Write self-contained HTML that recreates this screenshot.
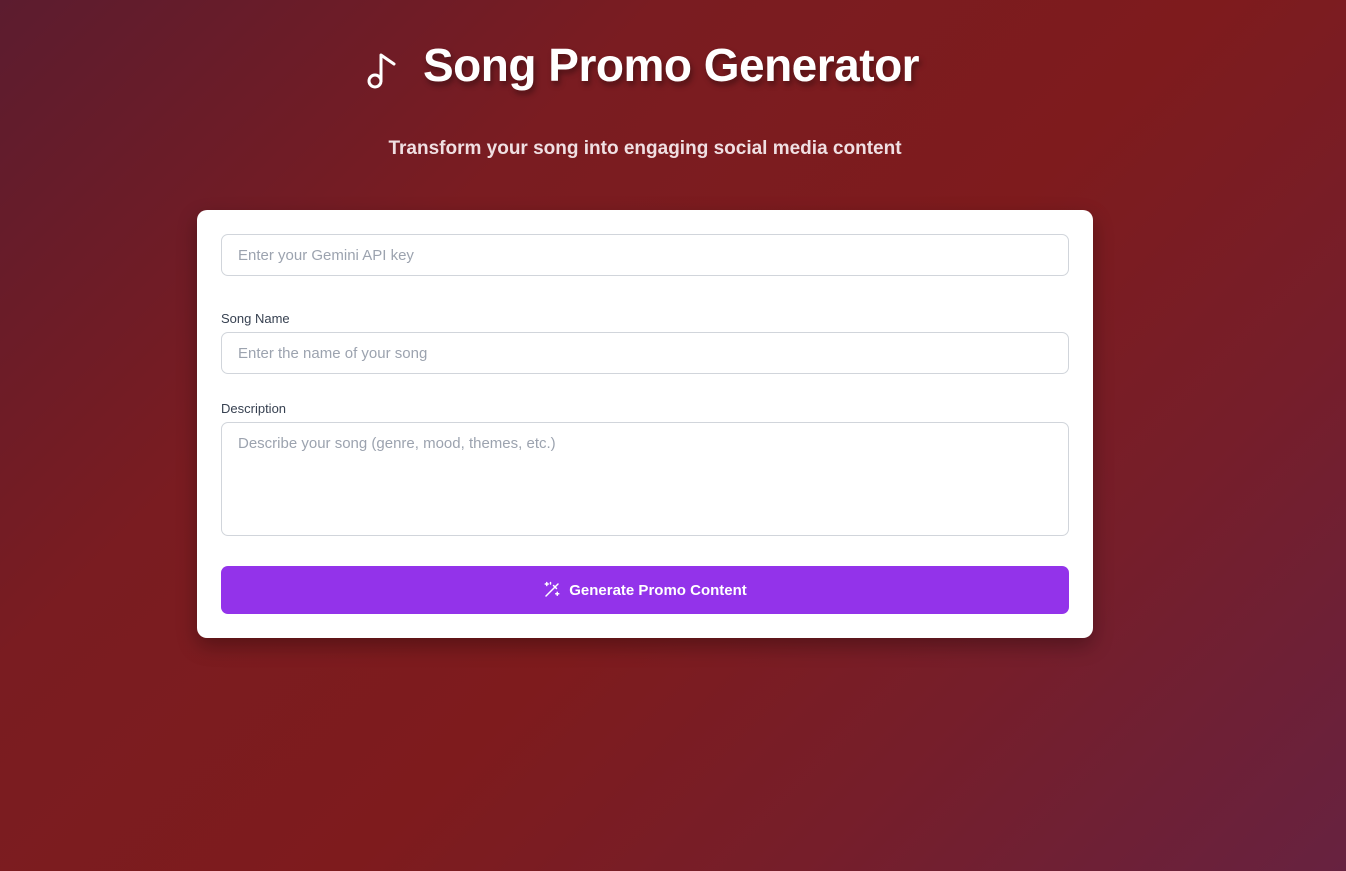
<!DOCTYPE html>
<html><head><style>
*{box-sizing:border-box;margin:0;padding:0}
body{width:1346px;height:871px;overflow:hidden;font-family:"Liberation Sans",sans-serif;background:linear-gradient(135deg,#5c1c2f 0%,#7a1c21 30%,#7e1b1d 55%,#761e2a 75%,#672240 100%);position:relative}
h1{position:absolute;left:423px;top:38px;font-size:46px;font-weight:bold;color:#fff;text-shadow:2px 4px 6px rgba(0,0,0,.35);letter-spacing:-0.5px;white-space:nowrap}
.note{position:absolute;left:364px;top:50px}
.sub{position:absolute;left:0;width:1290px;text-align:center;top:138px;font-size:19px;font-weight:bold;color:#f0dfe2}
.card{position:absolute;left:197px;top:210px;width:896px;height:428px;background:#fff;border-radius:10px;box-shadow:0 8px 20px rgba(0,0,0,.3)}
.in{position:absolute;left:24px;width:848px;height:42px;border:1px solid #d1d5db;border-radius:7px;font-size:15px;color:#9ca3af;padding:12px 16px}
.lab{position:absolute;left:24px;font-size:13px;color:#374151}
.btn{position:absolute;left:24px;top:356px;width:848px;height:48px;background:#9333ea;border-radius:7px;color:#fff;font-size:15px;font-weight:bold;display:flex;align-items:center;justify-content:center;gap:8px}
</style></head><body>
<svg class="note" width="36" height="42" viewBox="0 0 36 42" fill="none" stroke="#fff" stroke-width="3" stroke-linecap="round" stroke-linejoin="round"><circle cx="11" cy="31" r="6"/><path d="M17 31V5l13 9"/></svg>
<h1>Song Promo Generator</h1>
<div class="sub">Transform your song into engaging social media content</div>
<div class="card">
<div class="in" style="top:24px">Enter your Gemini API key</div>
<div class="lab" style="top:101px">Song Name</div>
<div class="in" style="top:122px">Enter the name of your song</div>
<div class="lab" style="top:191px">Description</div>
<div class="in" style="top:212px;height:114px">Describe your song (genre, mood, themes, etc.)</div>
<div class="btn"><svg width="18" height="18" viewBox="0 0 24 24" fill="none" stroke="#fff" stroke-width="2" stroke-linecap="round"><path d="M4 20L20 4M14 6l4 4"/><path d="M5 2v4M3 4h4M19 15v4M17 17h4M10 2v2"/></svg>Generate Promo Content</div>
</div>
</body></html>
